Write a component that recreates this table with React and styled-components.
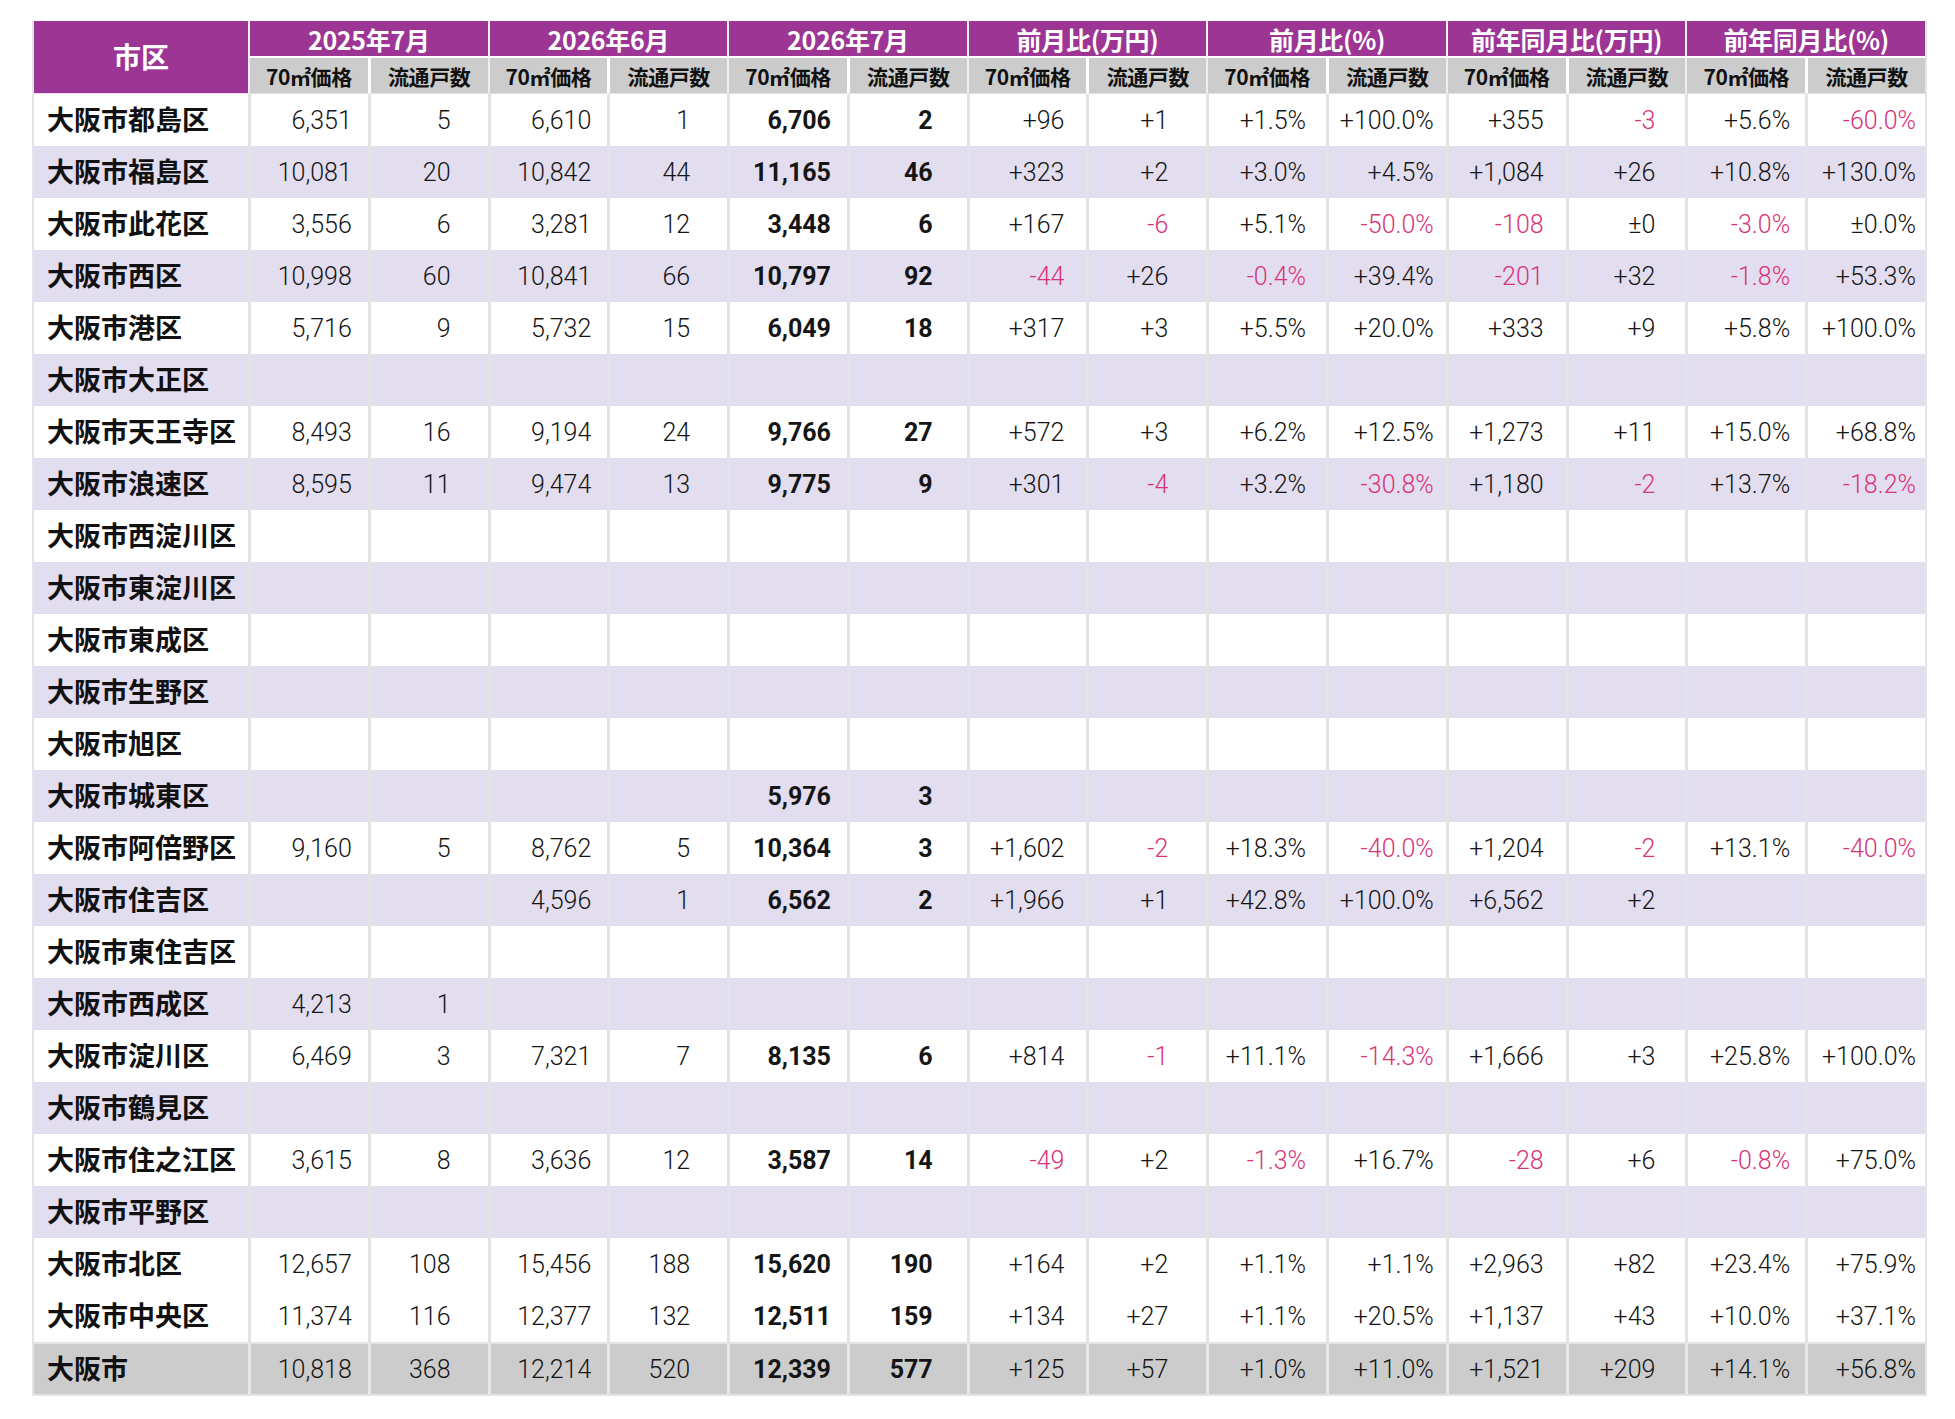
import React from "react";
import styled, { createGlobalStyle } from "styled-components";

const GlobalStyle = createGlobalStyle`
  body {
    margin: 0;
    background: #ffffff;
  }
`;

const PURPLE = "#9c3594";
const LAVENDER = "#e3ddf0";
const GREY = "#cccccc";
const LINE = "#e4e4e4";
const NEG = "#d9337a";

const groups = [
  "2025年7月",
  "2026年6月",
  "2026年7月",
  "前月比(万円)",
  "前月比(%)",
  "前年同月比(万円)",
  "前年同月比(%)",
];

const pads = [16, 37, 16, 37, 16, 34, 22, 38, 20, 12, 22, 30, 15, 9];

const rows = [
  ["大阪市都島区", "6,351", "5", "6,610", "1", "6,706", "2", "+96", "+1", "+1.5%", "+100.0%", "+355", "-3", "+5.6%", "-60.0%"],
  ["大阪市福島区", "10,081", "20", "10,842", "44", "11,165", "46", "+323", "+2", "+3.0%", "+4.5%", "+1,084", "+26", "+10.8%", "+130.0%"],
  ["大阪市此花区", "3,556", "6", "3,281", "12", "3,448", "6", "+167", "-6", "+5.1%", "-50.0%", "-108", "±0", "-3.0%", "±0.0%"],
  ["大阪市西区", "10,998", "60", "10,841", "66", "10,797", "92", "-44", "+26", "-0.4%", "+39.4%", "-201", "+32", "-1.8%", "+53.3%"],
  ["大阪市港区", "5,716", "9", "5,732", "15", "6,049", "18", "+317", "+3", "+5.5%", "+20.0%", "+333", "+9", "+5.8%", "+100.0%"],
  ["大阪市大正区"],
  ["大阪市天王寺区", "8,493", "16", "9,194", "24", "9,766", "27", "+572", "+3", "+6.2%", "+12.5%", "+1,273", "+11", "+15.0%", "+68.8%"],
  ["大阪市浪速区", "8,595", "11", "9,474", "13", "9,775", "9", "+301", "-4", "+3.2%", "-30.8%", "+1,180", "-2", "+13.7%", "-18.2%"],
  ["大阪市西淀川区"],
  ["大阪市東淀川区"],
  ["大阪市東成区"],
  ["大阪市生野区"],
  ["大阪市旭区"],
  ["大阪市城東区", "", "", "", "", "5,976", "3"],
  ["大阪市阿倍野区", "9,160", "5", "8,762", "5", "10,364", "3", "+1,602", "-2", "+18.3%", "-40.0%", "+1,204", "-2", "+13.1%", "-40.0%"],
  ["大阪市住吉区", "", "", "4,596", "1", "6,562", "2", "+1,966", "+1", "+42.8%", "+100.0%", "+6,562", "+2", "", ""],
  ["大阪市東住吉区"],
  ["大阪市西成区", "4,213", "1"],
  ["大阪市淀川区", "6,469", "3", "7,321", "7", "8,135", "6", "+814", "-1", "+11.1%", "-14.3%", "+1,666", "+3", "+25.8%", "+100.0%"],
  ["大阪市鶴見区"],
  ["大阪市住之江区", "3,615", "8", "3,636", "12", "3,587", "14", "-49", "+2", "-1.3%", "+16.7%", "-28", "+6", "-0.8%", "+75.0%"],
  ["大阪市平野区"],
  ["大阪市北区", "12,657", "108", "15,456", "188", "15,620", "190", "+164", "+2", "+1.1%", "+1.1%", "+2,963", "+82", "+23.4%", "+75.9%"],
  ["大阪市中央区", "11,374", "116", "12,377", "132", "12,511", "159", "+134", "+27", "+1.1%", "+20.5%", "+1,137", "+43", "+10.0%", "+37.1%"],
];

const total = ["大阪市", "10,818", "368", "12,214", "520", "12,339", "577", "+125", "+57", "+1.0%", "+11.0%", "+1,521", "+209", "+14.1%", "+56.8%"];

const Page = styled.div`
  padding: 21px 0 0 32px;
`;

const Table = styled.div`
  width: 1891px;
  border-left: 2px solid ${LINE};
  border-right: 2px solid ${LINE};
  border-bottom: 2px solid ${LINE};
  font-family: "Roboto", "Noto Sans CJK JP", sans-serif;
`;

const Head = styled.div`
  display: grid;
  grid-template-columns: 214px repeat(14, 1fr);
  grid-template-rows: 37px 36px;
`;

const CornerCell = styled.div`
  grid-row: 1 / span 2;
  background: ${PURPLE};
  color: #ffffff;
  display: flex;
  align-items: center;
  justify-content: center;
  font-family: "Noto Sans CJK JP", sans-serif;
  font-weight: 700;
  font-size: 28px;
  padding-bottom: 2px;
  border-bottom: 1px solid #ead9ea;
`;

const GroupCell = styled.div`
  grid-column: span 2;
  background: ${PURPLE};
  color: #ffffff;
  display: flex;
  align-items: center;
  justify-content: center;
  font-family: "Noto Sans CJK JP", sans-serif;
  font-weight: 700;
  font-size: 25px;
  letter-spacing: -0.3px;
  border-left: 2px solid #eeeeee;
  border-bottom: 2px solid #ffffff;
`;

const SubCell = styled.div`
  background: ${GREY};
  color: #111111;
  display: flex;
  align-items: center;
  justify-content: center;
  font-family: "Noto Sans CJK JP", sans-serif;
  font-weight: 700;
  font-size: 21px;
  letter-spacing: -0.4px;
  border-left: ${(p) => (p.$first ? "2px solid #eeeeee" : "3px solid #ffffff")};
  border-bottom: 1px solid #ead9ea;
`;

const Row = styled.div`
  display: grid;
  grid-template-columns: 214px repeat(14, 1fr);
  height: 52px;
  background: ${(p) => (p.$total ? GREY : p.$alt ? LAVENDER : "#ffffff")};
  border-top: ${(p) => (p.$total ? `2px solid ${LINE}` : "none")};
  box-sizing: border-box;
`;

const NameCell = styled.div`
  display: flex;
  align-items: center;
  padding: 0 0 3px 13px;
  font-family: "Noto Sans CJK JP", sans-serif;
  font-weight: 700;
  font-size: 27px;
  color: #111111;
`;

const ValueCell = styled.div`
  display: flex;
  align-items: center;
  justify-content: flex-end;
  padding-right: ${(p) => p.$pad}px;
  border-left: 3px solid ${(p) => (p.$total ? "#e8e8e8" : LINE)};
  font-size: 25px;
  font-weight: ${(p) => (p.$bold ? 700 : 300)};
  color: ${(p) => (p.$neg ? NEG : "#151515")};
  white-space: nowrap;
`;

function DataRow({ cells, alt, isTotal }) {
  const [name, ...values] = cells;
  return (
    <Row $alt={alt} $total={isTotal}>
      <NameCell>{name}</NameCell>
      {pads.map((pad, i) => {
        const v = values[i] || "";
        return (
          <ValueCell
            key={i}
            $pad={pad}
            $bold={i === 4 || i === 5}
            $neg={v.startsWith("-")}
            $total={isTotal}
          >
            {v}
          </ValueCell>
        );
      })}
    </Row>
  );
}

export default function App() {
  return (
    <Page>
      <GlobalStyle />
      <Table>
        <Head>
          <CornerCell>市区</CornerCell>
          {groups.map((g) => (
            <GroupCell key={g}>{g}</GroupCell>
          ))}
          {groups.map((g) => (
            <React.Fragment key={g}>
              <SubCell $first>70㎡価格</SubCell>
              <SubCell>流通戸数</SubCell>
            </React.Fragment>
          ))}
        </Head>
        {rows.map((r, i) => (
          <DataRow key={r[0]} cells={r} alt={i % 2 === 1 && i < 22} />
        ))}
        <DataRow cells={total} isTotal />
      </Table>
    </Page>
  );
}
